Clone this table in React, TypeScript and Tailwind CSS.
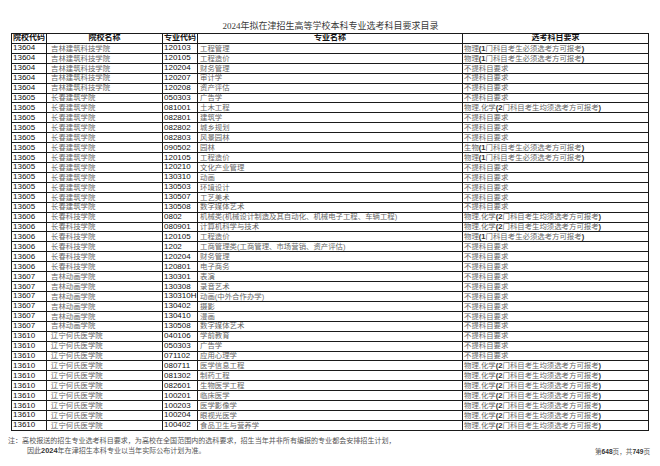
import React from "react";

type Row = [string, string, string, string, string];

const P1 = "物理(1门科目考生必须选考方可报考)";
const S1 = "生物(1门科目考生必须选考方可报考)";
const P2 = "物理,化学(2门科目考生均须选考方可报考)";
const N = "不提科目要求";
const JL = "吉林建筑科技学院";
const CC = "长春建筑学院";
const KJ = "长春科技学院";
const DH = "吉林动画学院";
const HS = "辽宁何氏医学院";

const rows: Row[] = [
  ["13604", JL, "120103", "工程管理", P1],
  ["13604", JL, "120105", "工程造价", P1],
  ["13604", JL, "120204", "财务管理", N],
  ["13604", JL, "120207", "审计学", N],
  ["13604", JL, "120208", "资产评估", N],
  ["13605", CC, "050303", "广告学", N],
  ["13605", CC, "081001", "土木工程", P2],
  ["13605", CC, "082801", "建筑学", N],
  ["13605", CC, "082802", "城乡规划", N],
  ["13605", CC, "082803", "风景园林", N],
  ["13605", CC, "090502", "园林", S1],
  ["13605", CC, "120105", "工程造价", P1],
  ["13605", CC, "120210", "文化产业管理", N],
  ["13605", CC, "130310", "动画", N],
  ["13605", CC, "130503", "环境设计", N],
  ["13605", CC, "130507", "工艺美术", N],
  ["13605", CC, "130508", "数字媒体艺术", N],
  ["13606", KJ, "0802", "机械类(机械设计制造及其自动化、机械电子工程、车辆工程)", P2],
  ["13606", KJ, "080901", "计算机科学与技术", P2],
  ["13606", KJ, "120105", "工程造价", P1],
  ["13606", KJ, "1202", "工商管理类(工商管理、市场营销、资产评估)", N],
  ["13606", KJ, "120204", "财务管理", N],
  ["13606", KJ, "120801", "电子商务", N],
  ["13607", DH, "130301", "表演", N],
  ["13607", DH, "130308", "录音艺术", N],
  ["13607", DH, "130310H", "动画(中外合作办学)", N],
  ["13607", DH, "130402", "摄影", N],
  ["13607", DH, "130410", "漫画", N],
  ["13607", DH, "130508", "数字媒体艺术", N],
  ["13610", HS, "040106", "学前教育", N],
  ["13610", HS, "050303", "广告学", N],
  ["13610", HS, "071102", "应用心理学", N],
  ["13610", HS, "080711", "医学信息工程", P2],
  ["13610", HS, "081302", "制药工程", P2],
  ["13610", HS, "082601", "生物医学工程", P2],
  ["13610", HS, "100201", "临床医学", P2],
  ["13610", HS, "100203", "医学影像学", P2],
  ["13610", HS, "100204", "眼视光医学", P2],
  ["13610", HS, "100402", "食品卫生与营养学", P2],
];

const isCjk = (c: string) => /[\u3000-\u9fff\uff00-\uffef]/.test(c);

function Mixed({ text, boldAscii }: { text: string; boldAscii?: boolean }) {
  const parts: { s: string; cjk: boolean }[] = [];
  for (const ch of text) {
    const c = isCjk(ch);
    const last = parts[parts.length - 1];
    if (last && last.cjk === c) last.s += ch;
    else parts.push({ s: ch, cjk: c });
  }
  return (
    <>
      {parts.map((p, i) =>
        p.cjk ? (
          <span key={i} className="text-[7.4px] text-[#666]">
            {p.s}
          </span>
        ) : (
          <span
            key={i}
            className={
              boldAscii && p.s !== ","
                ? "text-[7.6px] font-bold text-[#333]"
                : "text-[7.6px] text-[#777]"
            }
          >
            {p.s}
          </span>
        )
      )}
    </>
  );
}

const cell =
  "border-r border-b border-[#1a1a1a] flex items-center overflow-hidden whitespace-nowrap leading-none";

export default function App() {
  return (
    <div
      className="w-[660px] h-[466px] bg-white relative overflow-hidden"
      style={{ fontFamily: "'Liberation Sans', 'Noto Sans CJK SC', sans-serif" }}
    >
      <div className="pt-[20px]">
        <div
          className="h-[12px] leading-[12px] text-center text-[9px] text-[#3a3a3a] pl-[1px]"
          style={{ fontFamily: "'Liberation Serif', 'Noto Sans CJK SC', serif" }}
        >
          2024年拟在津招生高等学校本科专业选考科目要求目录
        </div>
      </div>
      <div className="ml-[11px] mt-[1px] w-[638px] border-l border-t border-[#1a1a1a] grid grid-cols-[35px_116px_35px_265px_186px] auto-rows-[9.925px]">
        <div className={`${cell} justify-center font-bold text-[8px] text-[#111]`}>院校代码</div>
        <div className={`${cell} justify-center font-bold text-[8px] text-[#111]`}>院校名称</div>
        <div className={`${cell} justify-center font-bold text-[8px] text-[#111]`}>专业代码</div>
        <div className={`${cell} justify-center font-bold text-[8px] text-[#111]`}>专业名称</div>
        <div className={`${cell} justify-center font-bold text-[8px] text-[#111]`}>选考科目要求</div>
        {rows.map((r, i) => (
          <React.Fragment key={i}>
            <div className={`${cell} pl-[1px] text-[8px] text-[#111]`}>{r[0]}</div>
            <div className={`${cell} pl-[4px]`}>
              <Mixed text={r[1]} />
            </div>
            <div className={`${cell} pl-[1px] text-[8px] text-[#111]`}>{r[2]}</div>
            <div className={`${cell} pl-[2px]`}>
              <Mixed text={r[3]} />
            </div>
            <div className={`${cell} pl-[1px]`}>
              <Mixed text={r[4]} boldAscii />
            </div>
          </React.Fragment>
        ))}
      </div>
      <div className="mt-[5px] text-[7.05px] leading-[10px] text-[#555]">
        <div className="pl-[8px] whitespace-nowrap">
          注：高校报送的招生专业选考科目要求，为高校在全国范围内的选科要求，招生当年并非所有编报的专业都会安排招生计划，
        </div>
        <div className="flex justify-between items-end pr-[10px]">
          <div className="pl-[27px] whitespace-nowrap">
            因此<span className="font-bold text-[#333] text-[7.4px]">2024</span>年在津招生本科专业以当年实际公布计划为准。
          </div>
          <div className="text-[6.6px] whitespace-nowrap leading-[9px]">
            第<span className="font-bold text-[#333]">648</span>页，共<span className="font-bold text-[#333]">749</span>页
          </div>
        </div>
      </div>
    </div>
  );
}
